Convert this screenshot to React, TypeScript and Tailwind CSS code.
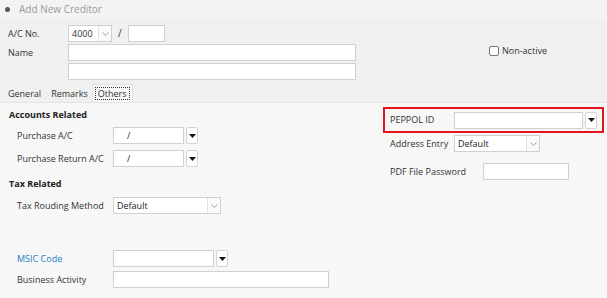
const font = { fontFamily: '"Open Sans", "Noto Sans", sans-serif' };

function Caret() {
  return (
    <div className="w-[12px] h-[17px] bg-white border border-[#d4d4d4] rounded-[2px] flex items-center justify-center">
      <svg width="7" height="4" viewBox="0 0 7 4">
        <path d="M0 0h7L3.5 4z" fill="#111" />
      </svg>
    </div>
  );
}

function Chevron() {
  return (
    <div className="w-[13px] h-[15px] border-l border-[#e2e2e2] bg-[#fafafa] flex items-center justify-center">
      <svg width="7" height="4" viewBox="0 0 7 4">
        <path d="M0.5 0.5L3.5 3.5L6.5 0.5" fill="none" stroke="#999" strokeWidth="0.9" />
      </svg>
    </div>
  );
}

function Box({ w, children }: { w: string; children?: React.ReactNode }) {
  return (
    <div className={`${w} h-[17px] bg-white border border-[#d0d0d0] flex items-center text-[9px] text-[#222]`}>
      {children}
    </div>
  );
}

function Lookup({ w, value }: { w: string; value?: string }) {
  return (
    <div className="flex items-center gap-[2px]">
      <Box w={w}>{value && <span className="pl-[13px]">{value}</span>}</Box>
      <Caret />
    </div>
  );
}

function Select({ w, value }: { w: string; value: string }) {
  return (
    <div className={`${w} h-[17px] bg-white border border-[#d0d0d0] flex items-center justify-between text-[9px] text-[#222]`}>
      <span className="pl-[3px]">{value}</span>
      <Chevron />
    </div>
  );
}

export default function App() {
  return (
    <div className="w-[607px] h-[298px] bg-[#f0f0f0] flex flex-col overflow-hidden text-[9px] text-[#333]" style={font}>
      <div className="h-[18px] bg-[#f3f3f3] flex items-center pl-[5px] gap-[9px]">
        <div className="w-[5px] h-[5px] rounded-full bg-[#555]" />
        <span className="text-[10px] text-[#9a9a9a]">Add New Creditor</span>
      </div>

      <div className="flex pl-[8px] pt-[7px]">
        <div className="flex flex-col gap-[2px]">
          <div className="flex items-center">
            <span className="w-[60px]">A/C No.</span>
            <div className="w-[44px] h-[17px] bg-white border border-[#d0d0d0] flex items-center justify-between">
              <span className="pl-[3px]">4000</span>
              <Chevron />
            </div>
            <span className="mx-[6px] text-[10px]">/</span>
            <Box w="w-[37px]" />
          </div>
          <div className="flex items-center">
            <span className="w-[60px]">Name</span>
            <Box w="w-[288px]" />
          </div>
          <div className="flex items-center">
            <span className="w-[60px]" />
            <Box w="w-[288px]" />
          </div>
        </div>
        <div className="flex items-start pt-[21px] pl-[133px] gap-[3px]">
          <div className="w-[10px] h-[10px] bg-white border border-[#777] rounded-[2px]" />
          <span className="leading-[10px]">Non-active</span>
        </div>
      </div>

      <div className="flex items-end h-[22px] text-[9px]">
        <div className="h-[17px] flex items-center pl-[8px] pr-[5px]">General</div>
        <div className="h-[17px] flex items-center pl-[5px] pr-[4px]">Remarks</div>
        <div className="h-[18px] flex items-center px-[2px] bg-[#f7f7f7] border border-b-0 border-[#e4e4e4]">
          <span className="border border-dotted border-[#333] px-[2px] leading-[11px]">Others</span>
        </div>
      </div>

      <div className="flex-1 bg-[#f7f7f7] border-t border-[#e4e4e4] flex">
        <div className="w-[383px] flex flex-col pl-[9px]">
          <div className="mt-[6px] font-bold text-[#222] leading-[12px]">Accounts Related</div>
          <div className="flex flex-col gap-[6px] mt-[6px] pl-[8px]">
            <div className="flex items-center">
              <span className="w-[96px]">Purchase A/C</span>
              <Lookup w="w-[71px]" value="/" />
            </div>
            <div className="flex items-center">
              <span className="w-[96px]">Purchase Return A/C</span>
              <Lookup w="w-[71px]" value="/" />
            </div>
          </div>
          <div className="mt-[11px] font-bold text-[#222] leading-[12px]">Tax Related</div>
          <div className="flex items-center mt-[7px] pl-[8px]">
            <span className="w-[96px]">Tax Rouding Method</span>
            <Select w="w-[108px]" value="Default" />
          </div>
          <div className="flex flex-col gap-[4px] mt-[36px] pl-[8px]">
            <div className="flex items-center">
              <span className="w-[96px] text-[#1f7cc4]">MSIC Code</span>
              <Lookup w="w-[101px]" />
            </div>
            <div className="flex items-center">
              <span className="w-[96px]">Business Activity</span>
              <Box w="w-[216px]" />
            </div>
          </div>
        </div>

        <div className="flex flex-col pt-[4px]">
          <div className="w-[221px] h-[26px] border-2 border-[#e5141b] flex items-center pl-[5px]">
            <span className="w-[64px]">PEPPOL ID</span>
            <Lookup w="w-[129px]" />
          </div>
          <div className="flex items-center mt-[2px] pl-[7px]">
            <span className="w-[64px]">Address Entry</span>
            <Select w="w-[86px]" value="Default" />
          </div>
          <div className="flex items-center mt-[11px] pl-[7px]">
            <span className="w-[93px]">PDF File Password</span>
            <Box w="w-[86px]" />
          </div>
        </div>
      </div>
    </div>
  );
}
